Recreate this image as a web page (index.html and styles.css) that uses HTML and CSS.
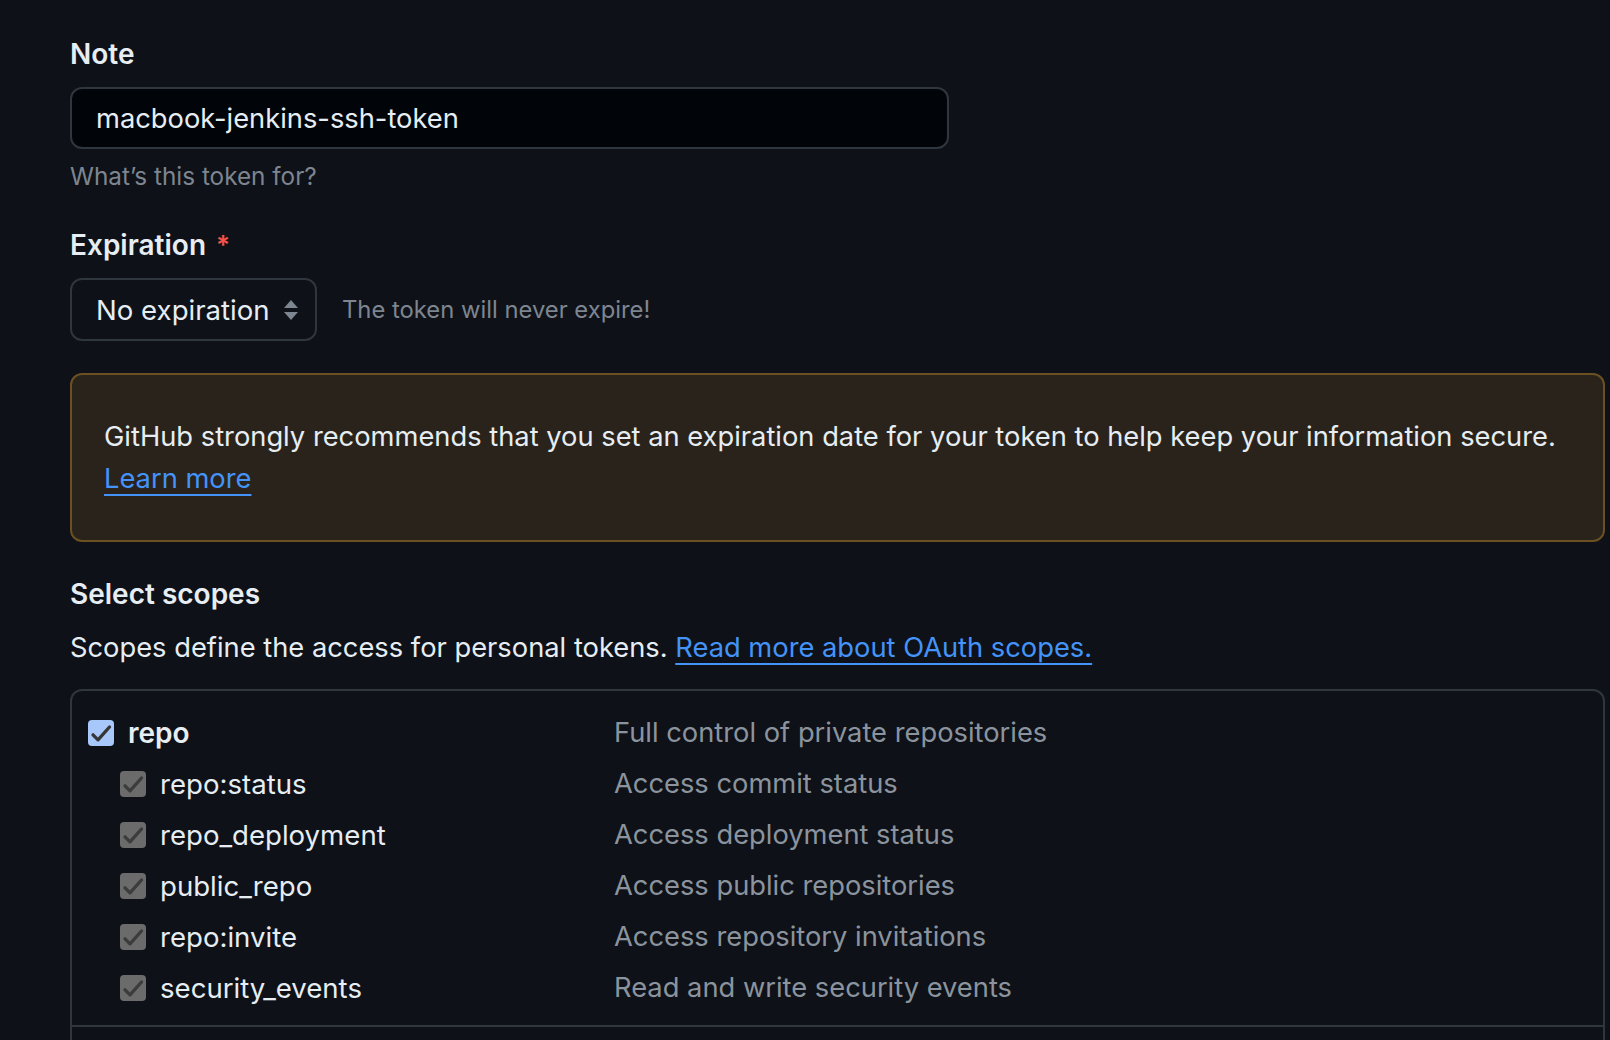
FILE: index.html
```html
<!DOCTYPE html>
<html lang="en">
<head>
<meta charset="utf-8">
<title>New personal access token</title>
<link rel="stylesheet" href="styles.css">
</head>
<body>
<main class="page">
  <div class="field">
    <label class="label" for="note">Note</label>
    <input id="note" class="text-input" type="text" value="macbook-jenkins-ssh-token">
    <p class="hint">What’s this token for?</p>
  </div>

  <div class="field field-exp">
    <div class="label">Expiration <span class="req">*</span></div>
    <div class="exp-row">
      <div class="select">
        <span>No expiration</span>
        <svg class="sel-arrows" width="16" height="24" viewBox="0 0 16 24" aria-hidden="true">
          <path d="M8 2 L15 10 L1 10 Z" fill="#7d8590"/>
          <path d="M1 14 L15 14 L8 22 Z" fill="#7d8590"/>
        </svg>
      </div>
      <span class="exp-note">The token will never expire!</span>
    </div>
  </div>

  <div class="flash">
    GitHub strongly recommends that you set an expiration date for your token to help keep your information secure.<br>
    <a class="link" href="#">Learn more</a>
  </div>

  <h2 class="label scopes-title">Select scopes</h2>
  <p class="scopes-desc">Scopes define the access for personal tokens. <a class="link" href="#">Read more about OAuth scopes.</a></p>

  <div class="scopes-box">
    <ul class="scope-group">
      <li class="scope-row parent">
        <span class="scope-name">
          <span class="cb cb-on"><svg viewBox="0 0 26 26" width="26" height="26"><path d="M5 14.8 L10 19.8 L21.5 7" fill="none" stroke="#363636" stroke-width="3.3" stroke-linecap="round" stroke-linejoin="round"/></svg></span>
          <strong>repo</strong>
        </span>
        <span class="scope-desc">Full control of private repositories</span>
      </li>
      <li class="scope-row child">
        <span class="scope-name"><span class="cb cb-dis"><svg viewBox="0 0 26 26" width="26" height="26"><path d="M5 14.8 L10 19.8 L21.5 7" fill="none" stroke="#3c3c3c" stroke-width="3.3" stroke-linecap="round" stroke-linejoin="round"/></svg></span>repo:status</span>
        <span class="scope-desc">Access commit status</span>
      </li>
      <li class="scope-row child">
        <span class="scope-name"><span class="cb cb-dis"><svg viewBox="0 0 26 26" width="26" height="26"><path d="M5 14.8 L10 19.8 L21.5 7" fill="none" stroke="#3c3c3c" stroke-width="3.3" stroke-linecap="round" stroke-linejoin="round"/></svg></span>repo_deployment</span>
        <span class="scope-desc">Access deployment status</span>
      </li>
      <li class="scope-row child">
        <span class="scope-name"><span class="cb cb-dis"><svg viewBox="0 0 26 26" width="26" height="26"><path d="M5 14.8 L10 19.8 L21.5 7" fill="none" stroke="#3c3c3c" stroke-width="3.3" stroke-linecap="round" stroke-linejoin="round"/></svg></span>public_repo</span>
        <span class="scope-desc">Access public repositories</span>
      </li>
      <li class="scope-row child">
        <span class="scope-name"><span class="cb cb-dis"><svg viewBox="0 0 26 26" width="26" height="26"><path d="M5 14.8 L10 19.8 L21.5 7" fill="none" stroke="#3c3c3c" stroke-width="3.3" stroke-linecap="round" stroke-linejoin="round"/></svg></span>repo:invite</span>
        <span class="scope-desc">Access repository invitations</span>
      </li>
      <li class="scope-row child">
        <span class="scope-name"><span class="cb cb-dis"><svg viewBox="0 0 26 26" width="26" height="26"><path d="M5 14.8 L10 19.8 L21.5 7" fill="none" stroke="#3c3c3c" stroke-width="3.3" stroke-linecap="round" stroke-linejoin="round"/></svg></span>security_events</span>
        <span class="scope-desc">Read and write security events</span>
      </li>
    </ul>
  </div>
</main>
</body>
</html>
```

FILE: styles.css
```css
* { box-sizing: border-box; }

html, body {
  margin: 0;
  padding: 0;
  background: #0e1117;
}

body {
  font-family: Inter, "Noto Sans", "Liberation Sans", sans-serif;
  color: #e6edf3;
  font-size: 27.3px;
  line-height: 42px;
  overflow: hidden;
  height: 1040px;
}

.page {
  margin: 0 5px 0 70px;
  padding-top: 33px;
}

.field { display: flex; flex-direction: column; align-items: flex-start; }

.label {
  display: block;
  font-size: 28px;
  font-weight: 600;
  line-height: 42px;
  margin: 0;
  color: #e6edf3;
}

.req {
  color: #f85149;
  font-size: 26px;
  line-height: 0;
  vertical-align: 1px;
  margin-left: 3px;
}

.text-input {
  margin-top: 12px;
  width: 879px;
  height: 62px;
  padding: 0 24px;
  background: #010409;
  border: 2px solid #30363d;
  border-radius: 12px;
  color: #e6edf3;
  font-family: inherit;
  font-size: 27.3px;
  outline: none;
}

.hint {
  margin: 9px 0 0;
  font-size: 24.3px;
  line-height: 36px;
  color: #7d8590;
}

.field-exp { margin-top: 30px; }

.exp-row {
  margin-top: 12px;
  display: flex;
  align-items: center;
  gap: 25px;
}

.select {
  width: 247px;
  height: 63px;
  border: 2px solid #30363d;
  border-radius: 12px;
  background: #0e1117;
  display: flex;
  align-items: center;
  justify-content: space-between;
  padding: 0 16px 0 24px;
  font-size: 27.6px;
}

.sel-arrows { display: block; }

.exp-note {
  font-size: 23.8px;
  color: #7d8590;
}

.flash {
  margin-top: 32px;
  background: #2a231c;
  border: 2px solid #6b5021;
  border-radius: 12px;
  padding: 41px 32px 40px;
  font-size: 27.3px;
  line-height: 42px;
  color: #e6edf3;
}

.link {
  color: #4493f8;
  text-decoration: underline;
  text-decoration-thickness: 2px;
  text-underline-offset: 6px;
}

.scopes-title { margin-top: 31px; }

.scopes-desc {
  margin: 12px 0 0;
  font-size: 27.3px;
  line-height: 42px;
}

.scopes-box {
  margin-top: 20px;
  border: 2px solid #30363d;
  border-radius: 12px;
  height: 400px;
}

.scope-group {
  list-style: none;
  margin: 0;
  padding: 16px 0 12px 16px;
  border-bottom: 2px solid #30363d;
}

.scope-row {
  display: grid;
  grid-template-columns: 526px 1fr;
  height: 51px;
  align-items: center;
}

.scope-name {
  display: flex;
  align-items: center;
  gap: 14px;
  font-size: 27.6px;
  color: #e6edf3;
}

.scope-name strong { font-weight: 600; font-size: 28px; }

.child .scope-name { padding-left: 32px; }

.scope-desc {
  font-size: 27.3px;
  color: #8b949e;
}

.cb {
  width: 26px;
  height: 26px;
  border-radius: 4px;
  display: inline-flex;
  align-items: center;
  justify-content: center;
  flex: none;
}

.cb svg { display: block; }

.cb-on { background: #a8c8fc; }
.cb-dis { background: #6b6b6b; }
```
